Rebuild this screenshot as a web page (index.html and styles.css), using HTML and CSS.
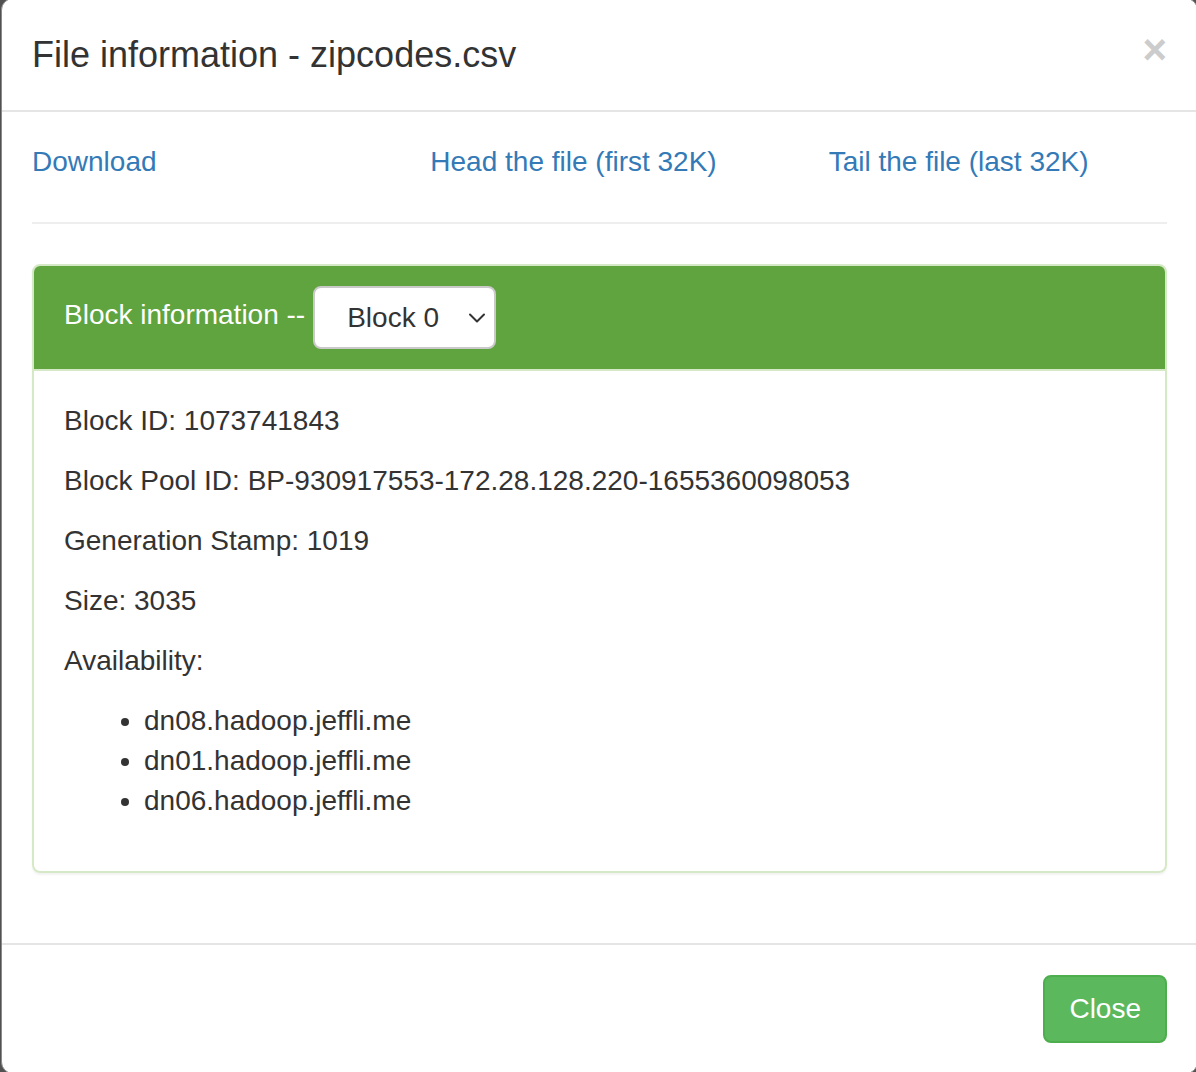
FILE: index.html
```html
<!DOCTYPE html>
<html lang="en">
<head>
<meta charset="utf-8">
<title>File information - zipcodes.csv</title>
<link rel="stylesheet" href="styles.css">
</head>
<body>
<div class="modal">
  <div class="modal-header">
    <h4 class="modal-title">File information - zipcodes.csv</h4>
    <button class="close" type="button" aria-label="Close">&times;</button>
  </div>
  <div class="modal-body">
    <div class="links-row">
      <div class="col"><a href="#">Download</a></div>
      <div class="col"><a href="#">Head the file (first 32K)</a></div>
      <div class="col"><a href="#">Tail the file (last 32K)</a></div>
    </div>
    <hr class="divider">
    <div class="panel">
      <div class="panel-heading">
        <span class="panel-label">Block information --</span>
        <div class="select">
          <span class="select-text">Block 0</span>
          <svg class="chevron" width="18" height="12" viewBox="0 0 18 12" aria-hidden="true">
            <path d="M2 2.5 L9 9.5 L16 2.5" fill="none" stroke="#333" stroke-width="2" stroke-linecap="round" stroke-linejoin="round"/>
          </svg>
        </div>
      </div>
      <div class="panel-body">
        <p>Block ID: 1073741843</p>
        <p>Block Pool ID: BP-930917553-172.28.128.220-1655360098053</p>
        <p>Generation Stamp: 1019</p>
        <p>Size: 3035</p>
        <p>Availability:</p>
        <ul class="hosts">
          <li>dn08.hadoop.jeffli.me</li>
          <li>dn01.hadoop.jeffli.me</li>
          <li>dn06.hadoop.jeffli.me</li>
        </ul>
      </div>
    </div>
  </div>
  <div class="modal-footer">
    <button class="btn-success" type="button">Close</button>
  </div>
</div>
</body>
</html>
```
FILE: styles.css
```css
html, body {
  margin: 0;
  padding: 0;
  height: 100%;
  overflow: hidden;
}
body {
  background: #515151;
  font-family: "Liberation Sans", Arial, Helvetica, sans-serif;
  font-size: 28px;
  line-height: 40px;
  color: #333;
}
.modal {
  box-sizing: border-box;
  width: 1197px;
  margin-top: -2px;
  margin-left: 1px;
  background: #fff;
  border: 1px solid #8a8a8a;
  border-radius: 12px;
  overflow: hidden;
}
.modal-header {
  display: flex;
  align-items: flex-start;
  justify-content: space-between;
  padding: 30px;
  border-bottom: 2px solid #e5e5e5;
}
.modal-title {
  margin: 0;
  font-size: 36px;
  line-height: 51px;
  font-weight: 400;
  color: #333;
}
.close {
  margin-top: 0;
  padding: 0;
  border: 0;
  background: transparent;
  font-family: "Liberation Sans", Arial, sans-serif;
  font-size: 42px;
  font-weight: bold;
  line-height: 42px;
  color: #cccccc;
  cursor: pointer;
}
.modal-body {
  padding: 30px;
}
.links-row {
  display: grid;
  grid-template-columns: repeat(3, 1fr);
  margin: 0 -30px;
}
.links-row .col {
  padding: 0 30px;
}
.links-row a {
  color: #337ab7;
  text-decoration: none;
}
.divider {
  margin: 40px 0;
  border: 0;
  border-top: 2px solid #eeeeee;
  height: 0;
}
.panel {
  border: 2px solid #d6e9c6;
  border-radius: 8px;
  box-shadow: 0 2px 2px rgba(0, 0, 0, 0.05);
  margin-bottom: 40px;
  overflow: hidden;
}
.panel-heading {
  display: flex;
  align-items: center;
  gap: 8px;
  padding: 20px 30px;
  background: #60a43f;
  color: #fff;
  border-bottom: 2px solid #d6e9c6;
}
.panel-label {
  position: relative;
  top: -3px;
}
.select {
  box-sizing: border-box;
  display: flex;
  align-items: center;
  justify-content: space-between;
  width: 183px;
  height: 63px;
  padding: 0 8px 0 32px;
  background: #fff;
  border: 2px solid #c9c9c9;
  border-radius: 8px;
  color: #333;
}
.select-text {
  line-height: 40px;
}
.chevron {
  display: block;
}
.panel-body {
  padding: 30px;
}
.panel-body p {
  margin: 0 0 20px;
}
.hosts {
  margin: 0 0 20px;
  padding-left: 80px;
}
.modal-footer {
  display: flex;
  justify-content: flex-end;
  padding: 30px;
  border-top: 2px solid #e5e5e5;
}
.btn-success {
  box-sizing: border-box;
  height: 68px;
  padding: 12px 24px;
  font-family: "Liberation Sans", Arial, sans-serif;
  font-size: 28px;
  line-height: 40px;
  color: #fff;
  background: #5cb85c;
  border: 2px solid #4cae4c;
  border-radius: 8px;
  cursor: pointer;
}
```
